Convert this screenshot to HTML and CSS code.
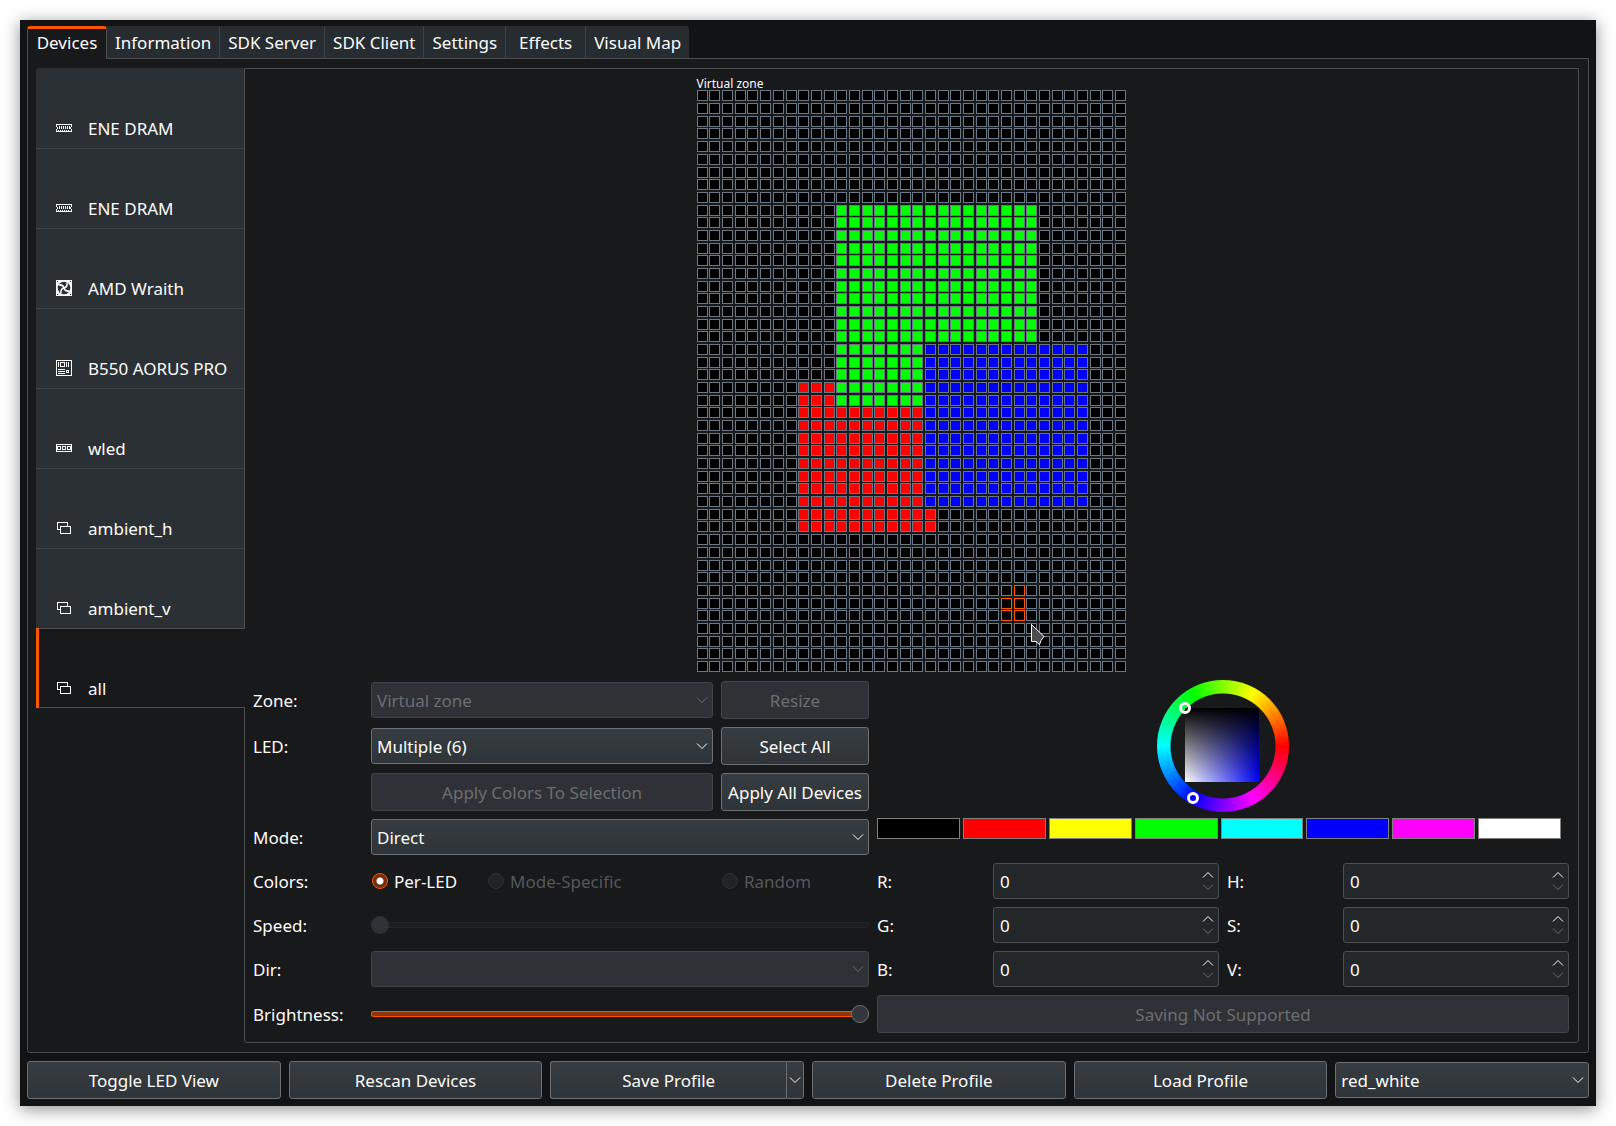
FILE: index.html
```html
<!DOCTYPE html>
<html lang="en">
<head>
<meta charset="utf-8">
<title>OpenRGB</title>
<link rel="stylesheet" href="styles.css">
</head>
<body>
<svg class="defs" aria-hidden="true">
  <symbol id="down" viewBox="0 0 12 8"><path d="M1 1.500 6 6.500 11 1.500" fill="none" stroke="currentColor"/></symbol>
  <symbol id="up" viewBox="0 0 12 8"><path d="M1 6.500 6 1.500 11 6.500" fill="none" stroke="currentColor"/></symbol>
  <symbol id="dram" viewBox="0 0 16 16"><path fill="none" stroke="currentColor" shape-rendering="crispEdges" d="M.5 7V4.500h15V7M.5 9v2.500h15V9M1.500 7v2M14.500 7v2M3.500 6v3M5.500 6v3M7.500 6v3M9.500 6v3M11.500 6v3M13.500 6v3M2.500 10v1M4.500 10v1M6.500 10v1M8.500 10v1M10.500 10v1M12.500 10v1"/></symbol>
  <symbol id="fan" viewBox="0 0 16 16">
    <path fill="currentColor" d="M0 0h16v16H0z"/>
    <circle cx="8" cy="8" r="6.300" fill="#2b3034"/>
    <g fill="none" stroke="currentColor" stroke-width="1.500">
      <path d="M8 8C7.500 6 5.500 4.500 2.500 5"/>
      <path d="M8 8C7.500 6 5.500 4.500 2.500 5" transform="rotate(90 8 8)"/>
      <path d="M8 8C7.500 6 5.500 4.500 2.500 5" transform="rotate(180 8 8)"/>
      <path d="M8 8C7.500 6 5.500 4.500 2.500 5" transform="rotate(270 8 8)"/>
    </g>
    <path fill="#2b3034" d="M1 1h1v1H1zM14 1h1v1h-1zM1 14h1v1H1zM14 14h1v1h-1z"/>
  </symbol>
  <symbol id="board" viewBox="0 0 16 16"><path fill="none" stroke="currentColor" shape-rendering="crispEdges" d="M.5.5h15v15H.5zM4.500 2.500h4v4h-4zM2.500 2v5M10.500 2v5M12.500 2v5M2 9.500h7M2 11.500h7M2 13.500h7M10.500 10.500h2v2h-2z"/></symbol>
  <symbol id="strip" viewBox="0 0 16 16"><path fill="none" stroke="currentColor" shape-rendering="crispEdges" d="M.5 4.500h15v7H.5zM1.500 6.500h3v3h-3zM6.500 6.500h3v3h-3zM11.500 6.500h3v3h-3z"/></symbol>
  <symbol id="virtual" viewBox="0 0 16 16"><path fill="none" stroke="currentColor" shape-rendering="crispEdges" d="M4.500 9.500h-3v-7h10v4M4.500 6.500h10v7h-10z"/></symbol>
</svg>

<main class="window">
  <div class="tabs" role="tablist">
    <button class="tab active" role="tab" aria-selected="true">Devices</button>
    <button class="tab" role="tab">Information</button>
    <button class="tab" role="tab">SDK Server</button>
    <button class="tab" role="tab">SDK Client</button>
    <button class="tab" role="tab">Settings</button>
    <button class="tab" role="tab">Effects</button>
    <button class="tab" role="tab">Visual Map</button>
  </div>

  <div class="pane">
    <nav class="devices">
      <button class="device"><svg class="icon"><use href="#dram"/></svg>ENE DRAM</button>
      <button class="device"><svg class="icon"><use href="#dram"/></svg>ENE DRAM</button>
      <button class="device"><svg class="icon"><use href="#fan"/></svg>AMD Wraith</button>
      <button class="device"><svg class="icon"><use href="#board"/></svg>B550 AORUS PRO</button>
      <button class="device"><svg class="icon"><use href="#strip"/></svg>wled</button>
      <button class="device"><svg class="icon"><use href="#virtual"/></svg>ambient_h</button>
      <button class="device"><svg class="icon"><use href="#virtual"/></svg>ambient_v</button>
      <button class="device active"><svg class="icon"><use href="#virtual"/></svg>all</button>
    </nav>

    <section class="panel">
      <div class="led-view">
        <div class="zone-name">Virtual zone</div>
        <div class="matrix">
          <canvas id="leds" width="429" height="582"></canvas>
          <svg class="pointer" viewBox="0 0 14 22"><path d="M.5.5v17H5l3.500 3 1.500-4 3-4z" fill="#4d4d4d" stroke="#fff"/></svg>
        </div>
      </div>

      <form class="controls">
        <label class="name" for="zone">Zone:</label>
        <span class="combo off"><select id="zone" disabled><option>Virtual zone</option></select><svg class="arrow"><use href="#down"/></svg></span>
        <button type="button" class="btn" disabled>Resize</button>

        <div class="picker">
          <div class="wheel">
            <div class="square"></div>
            <i class="handle tone"></i>
            <i class="handle hue"></i>
          </div>
          <div class="swatches">
            <button type="button" class="swatch black" aria-label="Black"></button>
            <button type="button" class="swatch red" aria-label="Red"></button>
            <button type="button" class="swatch yellow" aria-label="Yellow"></button>
            <button type="button" class="swatch green" aria-label="Green"></button>
            <button type="button" class="swatch cyan" aria-label="Cyan"></button>
            <button type="button" class="swatch blue" aria-label="Blue"></button>
            <button type="button" class="swatch magenta" aria-label="Magenta"></button>
            <button type="button" class="swatch white" aria-label="White"></button>
          </div>
        </div>

        <label class="name" for="led">LED:</label>
        <span class="combo"><select id="led"><option>Multiple (6)</option></select><svg class="arrow"><use href="#down"/></svg></span>
        <button type="button" class="btn">Select All</button>

        <button type="button" class="btn second" disabled>Apply Colors To Selection</button>
        <button type="button" class="btn">Apply All Devices</button>

        <label class="name" for="mode">Mode:</label>
        <span class="combo wide"><select id="mode"><option>Direct</option></select><svg class="arrow"><use href="#down"/></svg></span>

        <span class="name">Colors:</span>
        <div class="radios wide">
          <label class="radio"><input type="radio" name="colors" checked><span class="name">Per-LED</span></label>
          <label class="radio off"><input type="radio" name="colors" disabled><span class="name">Mode-Specific</span></label>
          <label class="radio off"><input type="radio" name="colors" disabled><span class="name">Random</span></label>
        </div>
        <label class="name" for="r">R:</label>
        <span class="spin"><input id="r" type="number" value="0"><svg class="arrow"><use href="#up"/></svg><svg class="arrow dim"><use href="#down"/></svg></span>
        <label class="name" for="h">H:</label>
        <span class="spin"><input id="h" type="number" value="0"><svg class="arrow"><use href="#up"/></svg><svg class="arrow dim"><use href="#down"/></svg></span>

        <label class="name" for="speed">Speed:</label>
        <input class="slider wide" id="speed" type="range" value="0" disabled>
        <label class="name" for="g">G:</label>
        <span class="spin"><input id="g" type="number" value="0"><svg class="arrow"><use href="#up"/></svg><svg class="arrow dim"><use href="#down"/></svg></span>
        <label class="name" for="s">S:</label>
        <span class="spin"><input id="s" type="number" value="0"><svg class="arrow"><use href="#up"/></svg><svg class="arrow dim"><use href="#down"/></svg></span>

        <label class="name" for="dir">Dir:</label>
        <span class="combo wide off"><select id="dir" disabled></select><svg class="arrow"><use href="#down"/></svg></span>
        <label class="name" for="b">B:</label>
        <span class="spin"><input id="b" type="number" value="0"><svg class="arrow"><use href="#up"/></svg><svg class="arrow dim"><use href="#down"/></svg></span>
        <label class="name" for="v">V:</label>
        <span class="spin"><input id="v" type="number" value="0"><svg class="arrow"><use href="#up"/></svg><svg class="arrow dim"><use href="#down"/></svg></span>

        <label class="name" for="brightness">Brightness:</label>
        <input class="slider wide full" id="brightness" type="range" value="100">
        <button type="button" class="btn save" disabled>Saving Not Supported</button>
      </form>
    </section>
  </div>

  <footer class="actions">
    <button class="btn">Toggle LED View</button>
    <button class="btn">Rescan Devices</button>
    <div class="split">
      <button class="btn">Save Profile</button>
      <button class="btn more" aria-label="More save options"><svg class="arrow"><use href="#down"/></svg></button>
    </div>
    <button class="btn">Delete Profile</button>
    <button class="btn">Load Profile</button>
    <span class="combo"><select aria-label="Profile"><option>red_white</option></select><svg class="arrow"><use href="#down"/></svg></span>
  </footer>
</main>
<script src="leds.js"></script>
</body>
</html>
```
FILE: styles.css
```css
* { box-sizing: border-box; }

body {
  margin: 0;
  padding: 20px;
  min-height: 100vh;
  display: flex;
  background: #fff;
  color: #fcfcfc;
  font: 17px/24px "Noto Sans", sans-serif;
}

button, select, input { font: inherit; color: inherit; margin: 0; }

.defs { display: none; }

.window {
  flex: 1;
  min-width: 0;
  display: flex;
  flex-direction: column;
  padding: 6px 7px 7px;
  background: #111314;
  box-shadow: 0 3px 16px rgba(0, 0, 0, .45);
}

/* Main tabs */
.tabs {
  display: flex;
  position: relative;
  z-index: 1;
  margin-bottom: -1px;
}
.tab {
  height: 33px;
  min-width: 80px;
  padding: 2px 8px 0;
  border: 0;
  border-right: 1px solid #3b4248;
  border-bottom: 1px solid #4b4d4f;
  background: #272c30;
}
.tab:last-child { border-right: 0; border-top-right-radius: 3px; }
.tab.active {
  background: #18191b;
  border: 1px solid #4b4d4f;
  border-top: 3px solid #ff5500;
  border-bottom: 0;
  border-radius: 3px 3px 0 0;
  padding: 0 8px 2px;
}

.pane {
  flex: 1;
  display: flex;
  padding: 9px 9px 9px 8px;
  border: 1px solid #4b4d4f;
  border-radius: 0 0 3px 3px;
  background: #18191b;
}

/* Device list */
.devices { flex: 0 0 208px; }
.device {
  display: flex;
  align-items: center;
  gap: 16px;
  width: 100%;
  height: 80px;
  padding: 42px 0 0 20px;
  border: 0;
  background: #2b3034;
  box-shadow: inset 0 1px #3b434a;
}
.device:first-child { box-shadow: none; border-top-left-radius: 3px; }
.device.active {
  position: relative;
  width: calc(100% + 1px);
  background: #18191b;
  box-shadow: inset 3px 0 #ff5500, inset 0 1px #4b4d4f, inset 0 -1px #4b4d4f;
}
.icon { width: 16px; height: 16px; margin-bottom: 2px; }

.panel {
  flex: 1;
  min-width: 0;
  padding: 8px 9px 9px 8px;
  border: 1px solid #4b4d4f;
  border-radius: 0 0 3px 3px;
}

/* LED matrix */
.led-view { width: 429px; margin: 0 auto 9px; }
.zone-name { font-size: 12px; line-height: 13px; }
.matrix { position: relative; }
.matrix canvas { display: block; }
.pointer { position: absolute; left: 334px; top: 534px; width: 14px; height: 22px; }

/* Controls */
.controls {
  display: grid;
  grid-template-columns: 110px 342fr 148px 108px 226fr 108px 226fr;
  gap: 8px;
  align-items: center;
}
.name { padding-top: 2px; }
.wide { grid-column: 2 / 4; }
.second { grid-column: 2; }
.save { grid-column: 4 / -1; }

.btn {
  height: 38px;
  padding: 2px 4px 0;
  border: 1px solid #6c7073;
  border-radius: 3px;
  background: linear-gradient(#373c40, #2e3438);
  white-space: nowrap;
}
.btn:disabled {
  color: #6b6e71;
  border-color: #404347;
  background: #2f3136;
}

.combo { display: grid; align-items: center; }
.combo select {
  grid-area: 1 / 1;
  width: 100%;
  height: 36px;
  padding: 2px 24px 0 5px;
  appearance: none;
  border: 1px solid #6c7073;
  border-radius: 3px;
  background: linear-gradient(#373c40, #2e3438);
}
.combo .arrow { grid-area: 1 / 1; justify-self: end; margin-right: 5px; pointer-events: none; }
.combo.off { color: #6b6e71; }
.combo.off select { opacity: 1; border-color: #404347; background: #2f3136; }
.arrow { width: 12px; height: 8px; }

.radios { display: grid; grid-template-columns: 108px 226px 1fr; gap: 8px; }
.radio { display: flex; align-items: center; gap: 6px; padding-left: 1px; white-space: nowrap; }
.radio.off { color: #55585a; }
.radio input {
  appearance: none;
  width: 16px;
  height: 16px;
  border: 1px solid #2c3134;
  border-radius: 50%;
  background: #202427;
}
.radio input:checked {
  border-color: #ff5500;
  background: radial-gradient(circle, #fcfcfc 3px, #72300f 4px);
}

.spin {
  display: grid;
  grid-template: 12px 12px / 1fr 12px;
  align-content: center;
  align-items: center;
  height: 36px;
  padding: 0 4px 0 6px;
  border: 1px solid #4b4f52;
  border-radius: 3px;
  background: #232729;
}
.spin input {
  grid-area: 1 / 1 / 3 / 2;
  min-width: 0;
  padding: 2px 0 0;
  border: 0;
  outline: 0;
  background: none;
  appearance: textfield;
}
.spin input::-webkit-inner-spin-button { appearance: none; }
.spin .arrow { grid-column: 2; }
.dim { color: #6b6e71; }

.slider {
  appearance: none;
  width: 100%;
  height: 18px;
  background: none;
}
.slider::-webkit-slider-runnable-track {
  height: 6px;
  border-radius: 3px;
  background: #1c1e20;
  box-shadow: inset 0 0 0 1px #232527;
}
.slider::-webkit-slider-thumb {
  appearance: none;
  width: 18px;
  height: 18px;
  margin-top: -6px;
  border: 1px solid #2f3237;
  border-radius: 50%;
  background: #2f3237;
}
.slider.full::-webkit-slider-runnable-track { background: #8c3410; box-shadow: inset 0 0 0 1px #ff5500; }
.slider.full::-webkit-slider-thumb { border-color: #6c7073; background: #31373b; }

/* Color picker */
.picker {
  grid-area: 1 / 4 / 5 / -1;
  align-self: start;
  display: flex;
  flex-direction: column;
  align-items: center;
  gap: 6px;
  height: 174px;
  margin-top: -1px;
}
.wheel {
  position: relative;
  display: grid;
  place-items: center;
  width: 132px;
  height: 132px;
  padding: 0 2px 2px 0;
  border-radius: 50%;
  background:
    radial-gradient(circle, #18191b 52px, transparent 53px),
    conic-gradient(from 90deg, #f00, #f0f, #00f, #0ff, #0f0, #ff0, #f00);
}
.square {
  width: 74px;
  height: 74px;
  background: linear-gradient(#000, transparent), linear-gradient(to right, #fff, #00f);
}
.handle {
  position: absolute;
  width: 12px;
  height: 12px;
  border: 3px solid #fff;
  border-radius: 50%;
}
.tone { left: 22px; top: 22px; }
.hue { left: 30px; top: 112px; }

.swatches {
  display: grid;
  grid-template-columns: repeat(8, 1fr);
  gap: 3px;
  width: 100%;
  padding-right: 8px;
}
.swatch { height: 21px; padding: 0; border: 1px solid #808080; }
.black { background: #000; }
.red { background: #f00; }
.yellow { background: #ff0; }
.green { background: #0f0; }
.cyan { background: #0ff; }
.blue { background: #00f; }
.magenta { background: #f0f; }
.white { background: #fff; }

/* Profile actions */
.actions {
  display: grid;
  grid-template-columns: repeat(6, 1fr);
  gap: 8px;
  align-items: center;
  margin-top: 8px;
}
.split { display: flex; }
.split .btn:first-child { flex: 1; border-right: 0; border-radius: 3px 0 0 3px; }
.more {
  display: grid;
  place-items: center;
  width: 18px;
  padding: 0;
  border-radius: 0 3px 3px 0;
}
```
FILE: leds.js
```js
// Draws the LED matrix: one outlined square for each LED, snapped to whole pixels.
const COLS = 34;
const ROWS = 46;
const PITCH = 12.678;
const SIZE = 11;

// Later areas win: [first column, last column, first row, last row, color]
const areas = [
  [8, 17, 23, 34, "#ff0000"],
  [18, 18, 33, 34, "#ff0000"],
  [11, 26, 9, 19, "#00ff00"],
  [11, 17, 20, 24, "#00ff00"],
  [18, 30, 20, 32, "#0000ff"]
];
const selected = [24, 25, 39, 41];

const inside = ([c0, c1, r0, r1], c, r) => c >= c0 && c <= c1 && r >= r0 && r <= r1;
const ctx = document.getElementById("leds").getContext("2d");

for (let r = 0; r < ROWS; r++) {
  for (let c = 0; c < COLS; c++) {
    const x = Math.floor(c * PITCH + 0.26);
    const y = Math.floor(r * PITCH + 0.94);
    const area = areas.filter(a => inside(a, c, r)).pop();
    ctx.fillStyle = inside(selected, c, r) ? "#ff5500" : "#6b7785";
    ctx.fillRect(x, y, SIZE, SIZE);
    ctx.fillStyle = area ? area[4] : "#000";
    ctx.fillRect(x + 1, y + 1, SIZE - 2, SIZE - 2);
  }
}
```
